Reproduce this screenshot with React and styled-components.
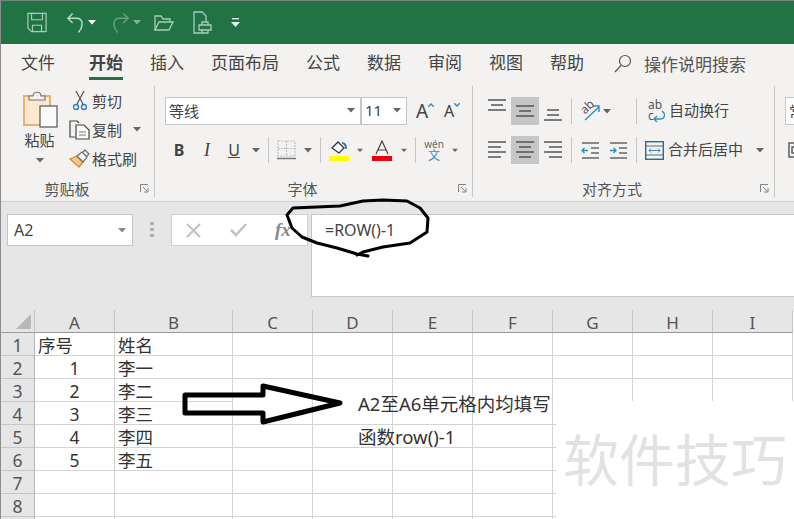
import React from "react";
import styled, { createGlobalStyle } from "styled-components";

const GlobalStyle = createGlobalStyle`
  html, body {
    margin: 0;
    padding: 0;
    background: #fff;
  }
  * {
    box-sizing: border-box;
  }
`;

const Page = styled.div`
  position: relative;
  width: 794px;
  height: 519px;
  overflow: hidden;
  border-left: 1px solid #8c8c8c;
  background: #fff;
  color: #444;
  font-family: "Noto Sans", "Noto Sans CJK SC", sans-serif;
`;

const TitleBar = styled.div`
  display: flex;
  align-items: center;
  height: 44px;
  padding-left: 26px;
  background: #217346;
  border-top: 1px solid #76857c;
`;

const TitleIcon = styled.div`
  display: flex;
  flex: none;
  justify-content: center;
  align-items: center;
  width: ${({ $w }) => $w}px;
  height: 30px;
  margin-left: ${({ $ml }) => $ml || 0}px;
  opacity: ${({ $dim }) => ($dim ? 0.45 : 1)};
`;

const Tabs = styled.div`
  display: flex;
  align-items: flex-start;
  gap: 27px;
  height: 36px;
  padding: 9px 0 0 20px;
  background: #f3f2f1;
`;

const Tab = styled.div`
  height: 27px;
  margin-right: ${({ $mr }) => $mr || 0}px;
  font-size: 17px;
  line-height: 20px;
  white-space: nowrap;
  font-weight: ${({ $active }) => ($active ? 700 : 400)};
  border-bottom: 3px solid ${({ $active }) => ($active ? "#217346" : "transparent")};
`;

const SearchTab = styled.div`
  display: flex;
  align-items: center;
  gap: 12px;
  height: 20px;
  margin-left: 3px;
  font-size: 17px;
  color: #555;
`;

const Ribbon = styled.div`
  display: flex;
  height: 122px;
  background: #f3f2f1;
  border-bottom: 1px solid #cfcfcf;
`;

const Group = styled.div`
  display: flex;
  flex: none;
  flex-direction: column;
  position: relative;
  width: ${({ $w }) => $w}px;
  &::after {
    content: "";
    position: absolute;
    top: 6px;
    right: 0;
    bottom: 4px;
    width: 1px;
    background: ${({ $open }) => ($open ? "transparent" : "#c6c6c6")};
  }
`;

const GroupBody = styled.div`
  flex: 1;
  display: flex;
  flex-direction: ${({ $row }) => ($row ? "row" : "column")};
  gap: ${({ $row }) => ($row ? 0 : 11)}px;
  padding: ${({ $row }) => ($row ? "6px 0 0" : "17px 0 0")};
`;

const GroupLabel = styled.div`
  position: relative;
  height: 24px;
  padding-top: 3px;
  font-size: 15px;
  line-height: 18px;
  text-align: center;
  padding-right: ${({ $pr }) => $pr || 0}px;
  color: #555;
`;

const Launcher = styled.svg`
  position: absolute;
  right: 6px;
  top: 7px;
`;

const PasteColumn = styled.div`
  display: flex;
  flex-direction: column;
  align-items: center;
  width: 68px;
  padding: 4px 0 0 11px;
  font-size: 15px;
`;

const PasteLabel = styled.div`
  margin: 2px 0 0 -2px;
  line-height: 20px;
`;

const CaretBox = styled.div`
  display: flex;
  justify-content: center;
  align-items: center;
  width: ${({ $w }) => $w || 10}px;
  height: ${({ $h }) => $h || 20}px;
  margin-top: ${({ $mt }) => $mt || 0}px;
  margin-left: ${({ $ml }) => $ml || 0}px;
  flex: none;
`;

const ClipList = styled.div`
  display: flex;
  flex-direction: column;
`;

const ClipRow = styled.div`
  display: flex;
  align-items: center;
  height: 29px;
  font-size: 15px;
  white-space: nowrap;
`;

const ClipIcon = styled.div`
  display: flex;
  justify-content: center;
  width: 23px;
  padding-right: 2px;
`;

const ToolRow = styled.div`
  display: flex;
  align-items: center;
  height: 28px;
  padding-left: ${({ $pl }) => $pl || 0}px;
`;

const Select = styled.div`
  display: flex;
  align-items: center;
  justify-content: space-between;
  flex: none;
  width: ${({ $w }) => $w}px;
  height: 28px;
  padding: 0 5px 2px 3px;
  background: #fff;
  border: 1px solid #c6c6c6;
  font-size: 15px;
  white-space: nowrap;
  overflow: hidden;
`;

const Slot = styled.div`
  display: flex;
  flex: none;
  justify-content: center;
  align-items: center;
  width: ${({ $w }) => $w}px;
  height: 28px;
  margin-left: ${({ $ml }) => $ml || 0}px;
  background: ${({ $on }) => ($on ? "#c6c6c6" : "transparent")};
`;

const FontFace = styled.span`
  font-family: "Liberation Serif", serif;
  font-size: 18px;
  font-weight: ${({ $b }) => ($b ? 700 : 400)};
  font-style: ${({ $i }) => ($i ? "italic" : "normal")};
  text-decoration: ${({ $u }) => ($u ? "underline" : "none")};
  color: #444;
`;

const SansFace = styled(FontFace)`
  font-family: "Noto Sans", sans-serif;
  font-size: ${({ $size }) => $size || 17}px;
`;

const RowSep = styled.div`
  flex: none;
  width: 1px;
  height: 26px;
  margin-left: ${({ $ml }) => $ml || 0}px;
  background: #c6c6c6;
`;

const TextTool = styled.div`
  display: flex;
  align-items: center;
  gap: ${({ $gap }) => $gap}px;
  margin-left: ${({ $ml }) => $ml}px;
  font-size: 15px;
  white-space: nowrap;
`;

const ToolText = styled.span`
  margin-top: -4px;
`;

const WenStack = styled.div`
  display: flex;
  flex-direction: column;
  align-items: center;
  font-size: 10px;
  line-height: 12px;
  color: #666;
  b {
    font-size: 12px;
    font-weight: 400;
    color: #2f8fc4;
  }
`;

const WrapGlyph = styled.div`
  position: relative;
  width: 18px;
  height: 24px;
  font-size: 12px;
  line-height: 11px;
  color: #555;
  svg {
    position: absolute;
    right: 0;
    bottom: 0;
  }
`;

const OrientGlyph = styled.div`
  position: relative;
  width: 20px;
  height: 22px;
  svg {
    position: absolute;
    left: 0;
    top: 0;
  }
  span {
    position: absolute;
    left: 0;
    top: 0;
    font-size: 12px;
    line-height: 14px;
    color: #555;
    transform: rotate(-45deg);
  }
`;

const FormulaBar = styled.div`
  display: flex;
  align-items: flex-start;
  height: 108px;
  padding: 12px 0 0 6px;
  background: #e6e6e6;
`;

const NameBox = styled.div`
  display: flex;
  align-items: center;
  justify-content: space-between;
  flex: none;
  width: 126px;
  height: 32px;
  padding: 0 6px;
  background: #fff;
  border: 1px solid #c6c6c6;
  font-size: 16px;
`;

const GripDots = styled.div`
  display: flex;
  flex-direction: column;
  gap: 3px;
  width: 4px;
  margin: 8px 17px 0 17px;
  flex: none;
  i {
    height: 3px;
    background: #b0b0b0;
  }
`;

const FxBox = styled.div`
  display: flex;
  align-items: center;
  gap: 29px;
  flex: none;
  width: 137px;
  height: 32px;
  padding-left: 14px;
  background: #fff;
  border: 1px solid #d0d0d0;
`;

const FxLabel = styled.span`
  font-family: "Liberation Serif", serif;
  font-size: 19px;
  font-style: italic;
  font-weight: 700;
  color: #888;
  margin-left: -1px;
`;

const FormulaInput = styled.div`
  flex: 1;
  height: 83px;
  margin-left: 3px;
  padding: 6px 0 0 13px;
  background: #fff;
  border: 1px solid #c6c6c6;
  border-right: 0;
  font-size: 16px;
  line-height: 18px;
`;

const SheetGrid = styled.div`
  display: grid;
  grid-template-columns: 34px 80px 118px repeat(7, 80px);
  grid-auto-rows: 23px;
`;

const Corner = styled.div`
  display: flex;
  align-items: flex-end;
  justify-content: flex-end;
  padding: 0 3px 3px 0;
  background: #e6e6e6;
  border-right: 1px solid #c6c6c6;
  border-bottom: 1px solid #9b9b9b;
`;

const ColHead = styled.div`
  padding-top: 3px;
  background: #e6e6e6;
  border-right: 1px solid #c6c6c6;
  border-bottom: 1px solid #9b9b9b;
  font-size: 17px;
  line-height: 20px;
  text-align: center;
  color: #555;
`;

const RowHead = styled.div`
  padding-top: 3px;
  background: #e6e6e6;
  border-right: 1px solid #b4b4b4;
  border-bottom: 1px solid #c6c6c6;
  font-size: 17.5px;
  line-height: 19px;
  text-align: center;
  color: #555;
`;

const Cell = styled.div`
  padding: 3px 3px 0;
  background: #fff;
  border-right: 1px solid #d4d4d4;
  border-bottom: 1px solid ${({ $open }) => ($open ? "#fff" : "#d4d4d4")};
  font-size: 17.5px;
  line-height: 19px;
  color: #333;
  text-align: ${({ $center }) => ($center ? "center" : "left")};
  white-space: nowrap;
`;

const Ink = styled.svg`
  position: absolute;
  left: -1px;
  top: 0;
  pointer-events: none;
`;

const Note = styled.div`
  position: absolute;
  left: 357px;
  top: ${({ $top }) => $top}px;
  font-size: 18.5px;
  line-height: 22px;
  color: #333;
  white-space: nowrap;
`;

const WhitePatch = styled.div`
  position: absolute;
  left: 555px;
  top: 401px;
  right: 0;
  bottom: 0;
  background: #fff;
`;

const Watermark = styled.div`
  position: absolute;
  left: 562px;
  top: 419px;
  font-size: 56px;
  line-height: 80px;
  color: #e2e2e2;
  white-space: nowrap;
`;

const Caret = ({ color = "#666" }) => (
  <svg width="8" height="5" viewBox="0 0 8 5">
    <path d="M0 0h8L4 4.5z" fill={color} />
  </svg>
);

const SaveIcon = () => (
  <svg width="21" height="21" viewBox="0 0 22 22" fill="none" stroke="#a5d0b8" strokeWidth="1.3">
    <path d="M1 1h20v20H5l-4-4z" />
    <path d="M5 1v7h12V1M6 21v-7h10v7" />
  </svg>
);

const UndoIcon = ({ flip }) => (
  <svg width="19" height="22" viewBox="0 0 20 22" fill="none" stroke="#b8dcc8" strokeWidth="1.5" style={{ transform: flip ? "scaleX(-1)" : "none" }}>
    <path d="M7 1L2 6l5 5" />
    <path d="M2 6h9c7 0 8 8 2 15" />
  </svg>
);

const OpenIcon = () => (
  <svg width="20" height="18" viewBox="0 0 20 18" fill="none" stroke="#a5d0b8" strokeWidth="1.3">
    <path d="M1 16V2h6l2 3h7v3" />
    <path d="M1 16l4-8h14l-4 8z" />
  </svg>
);

const PreviewIcon = () => (
  <svg width="19" height="23" viewBox="0 0 19 23" fill="none" stroke="#a5d0b8" strokeWidth="1.3">
    <path d="M9 22H1V1h8l4 4v5" />
    <path d="M6 14h12v5H6zM9 14v-3h6v3M9 19v3h6v-3" />
  </svg>
);

const CustomizeIcon = () => (
  <svg width="9" height="10" viewBox="0 0 9 10" fill="#e8f2ec">
    <rect x="1" y="0" width="7" height="1.4" />
    <path d="M0 4h9L4.500 9z" />
  </svg>
);

const SearchIcon = () => (
  <svg width="18" height="19" viewBox="0 0 18 19" fill="none" stroke="#555" strokeWidth="1.2">
    <circle cx="11" cy="7" r="5.5" />
    <path d="M7 11.500L1 18" />
  </svg>
);

const PasteIcon = () => (
  <svg width="35" height="38" viewBox="0 0 35 38">
    <rect x="1" y="6" width="26" height="29" fill="#fbe8cf" stroke="#eab06c" strokeWidth="2" />
    <path d="M6 10V6h4c0-5 8-5 8 0h4v4z" fill="#f3f2f1" stroke="#777" strokeWidth="1.2" />
    <rect x="17" y="16" width="17" height="21" fill="#fafafa" stroke="#555" strokeWidth="1.2" />
  </svg>
);

const ScissorsIcon = () => (
  <svg width="14" height="20" viewBox="0 0 14 20" fill="none">
    <path d="M3 0l7.500 14M11 0L3.500 14" stroke="#555" strokeWidth="1.2" />
    <circle cx="3" cy="16" r="2.500" stroke="#2f7fb8" strokeWidth="1.4" />
    <circle cx="11" cy="16" r="2.500" stroke="#2f7fb8" strokeWidth="1.4" />
  </svg>
);

const CopyIcon = () => (
  <svg width="21" height="20" viewBox="0 0 21 20" fill="none" stroke="#444" strokeWidth="1.2">
    <path d="M6 17H1V1h7l2 2" />
    <path d="M7 5h8l5 5v9H7z" fill="#fafafa" />
    <path d="M10 12h7M10 15h7" stroke="#777" />
  </svg>
);

const BrushIcon = () => (
  <svg width="21" height="19" viewBox="0 0 21 19">
    <path d="M1 10l7-3 6 6-4 5z" fill="#f5c58a" stroke="#e08a30" strokeWidth="1.3" />
    <path d="M8 7l5-4 5 5-4 5zM14 3l2-2 4 4-2 2" fill="#f7f7f7" stroke="#666" strokeWidth="1.2" />
  </svg>
);

const BorderIcon = () => (
  <svg width="19" height="20" viewBox="0 0 19 20" fill="none">
    <path d="M1 1h17v15H1zM9.500 1v15M1 8.500h17" stroke="#c0c0c0" strokeWidth="1.2" strokeDasharray="2 1" />
    <path d="M0 18.500h19" stroke="#777" strokeWidth="1.500" />
  </svg>
);

const FillIcon = () => (
  <svg width="21" height="21" viewBox="0 0 21 21">
    <path d="M3 8l6-6 6 6-5 5z" fill="#fff" stroke="#333" strokeWidth="1.3" />
    <path d="M13 3c3 0 4 2 4 6" fill="none" stroke="#2f7fb8" strokeWidth="2" />
    <rect y="16" width="20" height="5" fill="#ffff00" />
  </svg>
);

const ColorAIcon = () => (
  <svg width="20" height="21" viewBox="0 0 20 21" fill="none">
    <path d="M4 14L10 1l6 13M6 10h8" stroke="#444" strokeWidth="1.200" />
    <rect y="16" width="20" height="5" fill="#e60012" />
  </svg>
);

const SizeArrow = ({ up }) => (
  <svg width="6" height="4" viewBox="0 0 6 4" fill="none" stroke="#2f8fc4" strokeWidth="1.4" style={{ marginBottom: 12 }}>
    <path d={up ? "M0 4l3-3 3 3" : "M0 0l3 3 3-3"} />
  </svg>
);

// horizontal bars 5px apart, used for all the alignment buttons
const BarsIcon = ({ rows, top }) => (
  <svg width="18" height="28" viewBox="0 0 18 28" stroke="#555" strokeWidth="1.5">
    {rows.map(([x1, x2], i) => (
      <path key={i} d={`M${x1} ${top + i * 5}H${x2}`} />
    ))}
  </svg>
);

const OrientArrow = () => (
  <svg width="20" height="22" viewBox="0 0 20 22" fill="none">
    <path d="M5 20L19 7M13 6h6v6" stroke="#2f8fc4" strokeWidth="1.4" />
  </svg>
);

const IndentIcon = ({ right }) => (
  <svg width="19" height="18" viewBox="0 0 19 18" fill="none">
    <path d="M1 2h17M10 7h8M10 12h8M1 17h17" stroke="#666" strokeWidth="1.4" />
    <path d={right ? "M1 9.500h6M4.500 7l2.500 2.500L4.500 12" : "M7 9.500H1M3.500 7L1 9.500 3.500 12"} stroke="#2f8fc4" strokeWidth="1.4" />
  </svg>
);

const WrapArrow = () => (
  <svg width="14" height="13" viewBox="0 0 14 13" fill="none">
    <path d="M10 1c4 3 3 8-2 8H2M5 6L2 9l3 3" stroke="#2f8fc4" strokeWidth="1.4" />
  </svg>
);

const MergeIcon = () => (
  <svg width="19" height="19" viewBox="0 0 19 19" fill="none">
    <rect x="0.700" y="0.700" width="17.600" height="17.600" stroke="#1f6f9f" strokeWidth="1.4" />
    <path d="M1 5h17M1 14h17" stroke="#666" />
    <path d="M4 9.500h11M6 7.500l-2 2 2 2M13 7.500l2 2-2 2" stroke="#2f8fc4" />
  </svg>
);

const LauncherIcon = () => (
  <Launcher width="9" height="9" viewBox="0 0 9 9" fill="none" stroke="#777">
    <path d="M8 4V8H4M0.500 8V0.500H8M3 3l4 4" strokeWidth="0.9" />
  </Launcher>
);

const CrossIcon = () => (
  <svg width="15" height="15" viewBox="0 0 15 15" stroke="#c4c4c4" strokeWidth="2.200">
    <path d="M1 1l13 13M14 1L1 14" />
  </svg>
);

const CheckIcon = () => (
  <svg width="17" height="14" viewBox="0 0 17 14" fill="none" stroke="#c4c4c4" strokeWidth="2.600">
    <path d="M1 7l5 5L16 1" />
  </svg>
);

const CutOffIcon = () => (
  <svg width="14" height="16" viewBox="0 0 14 16" fill="none" stroke="#555" strokeWidth="1.4">
    <rect x="1" y="1" width="12" height="14" />
    <rect x="4" y="5" width="6" height="6" />
  </svg>
);

const tabs = ["文件", "开始", "插入", "页面布局", "公式", "数据", "审阅", "视图", "帮助"];
const columns = ["A", "B", "C", "D", "E", "F", "G", "H", "I"];
const names = ["姓名", "李一", "李二", "李三", "李四", "李五", "", "", ""];
const serials = ["序号", "1", "2", "3", "4", "5", "", "", ""];

const SheetRows = () =>
  names.map((name, i) => (
    <React.Fragment key={i}>
      {/* the ninth row only just shows at the bottom edge, so no number */}
      <RowHead>{i < 8 ? i + 1 : ""}</RowHead>
      <Cell $center={i > 0}>{serials[i]}</Cell>
      <Cell>{name}</Cell>
      {columns.slice(2).map((col) => (
        <Cell key={col} $open={i === 2} />
      ))}
    </React.Fragment>
  ));

const App = () => {
  return (
    <Page>
      <GlobalStyle />
      <TitleBar>
        <TitleIcon $w={20}><SaveIcon /></TitleIcon>
        <TitleIcon $w={20} $ml={18}><UndoIcon /></TitleIcon>
        <TitleIcon $w={14}><Caret color="#fff" /></TitleIcon>
        <TitleIcon $w={20} $ml={11} $dim><UndoIcon flip /></TitleIcon>
        <TitleIcon $w={14} $dim><Caret color="#fff" /></TitleIcon>
        <TitleIcon $w={20} $ml={10}><OpenIcon /></TitleIcon>
        <TitleIcon $w={19} $ml={19}><PreviewIcon /></TitleIcon>
        <TitleIcon $w={9} $ml={19}><CustomizeIcon /></TitleIcon>
      </TitleBar>

      <Tabs>
        {tabs.map((tab) => (
          <Tab key={tab} $active={tab === "开始"} $mr={tab === "文件" ? 7 : 0}>{tab}</Tab>
        ))}
        <SearchTab>
          <SearchIcon />
          操作说明搜索
        </SearchTab>
      </Tabs>

      <Ribbon>
        <Group $w={154}>
          <GroupBody $row>
            <PasteColumn>
              <PasteIcon />
              <PasteLabel>粘贴</PasteLabel>
              <CaretBox $mt={1} $h={18} $ml={-2}><Caret /></CaretBox>
            </PasteColumn>
            <ClipList>
              <ClipRow>
                <ClipIcon><ScissorsIcon /></ClipIcon>
                剪切
              </ClipRow>
              <ClipRow>
                <ClipIcon><CopyIcon /></ClipIcon>
                复制
                <CaretBox $w={30}><Caret /></CaretBox>
              </ClipRow>
              <ClipRow>
                <ClipIcon><BrushIcon /></ClipIcon>
                格式刷
              </ClipRow>
            </ClipList>
          </GroupBody>
          <GroupLabel $pr={22}>
            剪贴板
            <LauncherIcon />
          </GroupLabel>
        </Group>

        <Group $w={318}>
          <GroupBody>
            <ToolRow $pl={10}>
              <Select $w={196}>
                等线
                <Caret />
              </Select>
              <Select $w={46}>
                11
                <Caret />
              </Select>
              <Slot $w={24} $ml={6}>
                <SansFace $size={19}>A</SansFace>
                <SizeArrow up />
              </Slot>
              <Slot $w={24} $ml={3}>
                <SansFace $size={16}>A</SansFace>
                <SizeArrow />
              </Slot>
            </ToolRow>
            <ToolRow $pl={10}>
              <Slot $w={28}><SansFace $b $size={16}>B</SansFace></Slot>
              <Slot $w={28}><FontFace $i>I</FontFace></Slot>
              <Slot $w={26}><SansFace $u $size={16}>U</SansFace></Slot>
              <Slot $w={18}><Caret /></Slot>
              <RowSep $ml={3} />
              <Slot $w={34}><BorderIcon /></Slot>
              <Slot $w={10}><Caret /></Slot>
              <RowSep $ml={7} />
              <Slot $w={36}><FillIcon /></Slot>
              <Slot $w={6}><Caret /></Slot>
              <Slot $w={38}><ColorAIcon /></Slot>
              <Slot $w={6}><Caret /></Slot>
              <RowSep $ml={8} />
              <Slot $w={36}>
                <WenStack>
                  wén
                  <b>文</b>
                </WenStack>
              </Slot>
              <Slot $w={6}><Caret /></Slot>
            </ToolRow>
          </GroupBody>
          <GroupLabel $pr={23}>
            字体
            <LauncherIcon />
          </GroupLabel>
        </Group>

        <Group $w={302}>
          <GroupBody>
            <ToolRow $pl={10}>
              <Slot $w={28}><BarsIcon rows={[[0, 18], [3, 15], [0, 18]]} top={3} /></Slot>
              <Slot $w={28} $on><BarsIcon rows={[[0, 18], [3, 15], [0, 18]]} top={9} /></Slot>
              <Slot $w={28}><BarsIcon rows={[[3, 15], [3, 15], [0, 18]]} top={13} /></Slot>
              <RowSep $ml={4} />
              <Slot $w={20} $ml={8}>
                <OrientGlyph>
                  <OrientArrow />
                  <span>ab</span>
                </OrientGlyph>
              </Slot>
              <Slot $w={14}><Caret /></Slot>
              <RowSep $ml={22} />
              <TextTool $ml={11} $gap={3}>
                <WrapGlyph>
                  ab
                  <br />
                  c
                  <WrapArrow />
                </WrapGlyph>
                <ToolText>自动换行</ToolText>
              </TextTool>
            </ToolRow>
            <ToolRow $pl={10}>
              <Slot $w={28}><BarsIcon rows={[[0, 18], [0, 13], [0, 18], [0, 13]]} top={6} /></Slot>
              <Slot $w={28} $on><BarsIcon rows={[[0, 18], [3, 15], [0, 18], [3, 15]]} top={6} /></Slot>
              <Slot $w={28}><BarsIcon rows={[[0, 18], [5, 18], [0, 18], [5, 18]]} top={6} /></Slot>
              <RowSep $ml={4} />
              <Slot $w={20} $ml={8}><IndentIcon /></Slot>
              <Slot $w={20} $ml={8}><IndentIcon right /></Slot>
              <RowSep $ml={8} />
              <TextTool $ml={8} $gap={4}>
                <MergeIcon />
                <ToolText>合并后居中</ToolText>
                <CaretBox $w={8} $ml={9}><Caret /></CaretBox>
              </TextTool>
            </ToolRow>
          </GroupBody>
          <GroupLabel $pr={24}>
            对齐方式
            <LauncherIcon />
          </GroupLabel>
        </Group>

        <Group $w={60} $open>
          <GroupBody>
            <ToolRow $pl={10}>
              <Select $w={60}>常规</Select>
            </ToolRow>
            <ToolRow $pl={13}>
              <CutOffIcon />
            </ToolRow>
          </GroupBody>
        </Group>
      </Ribbon>

      <FormulaBar>
        <NameBox>
          A2
          <Caret color="#888" />
        </NameBox>
        <GripDots><i /><i /><i /></GripDots>
        <FxBox>
          <CrossIcon />
          <CheckIcon />
          <FxLabel>fx</FxLabel>
        </FxBox>
        <FormulaInput>=ROW()-1</FormulaInput>
      </FormulaBar>

      <SheetGrid>
        <Corner>
          <svg width="15" height="15" viewBox="0 0 15 15">
            <path d="M15 0v15H0z" fill="#b8b8b8" />
          </svg>
        </Corner>
        {columns.map((col) => (
          <ColHead key={col}>{col}</ColHead>
        ))}
        <SheetRows />
      </SheetGrid>

      <Ink width="794" height="519" viewBox="0 0 794 519" fill="none" stroke="#000">
        <path
          d="M368 256L357 254L337 248L317 243L302 237L292 228L287 215L293 208L317 207L340 206L363 201L383 200L407 201L420 208L428 218L427 232L410 243L383 247L363 252L357 255"
          strokeWidth="3"
          strokeLinejoin="round"
          strokeLinecap="round"
        />
        <path
          d="M185 395H263V386L340 403L263 422V413H185Z"
          strokeWidth="5"
          strokeLinejoin="round"
        />
      </Ink>

      <WhitePatch />
      <Note $top={393}>A2至A6单元格内均填写</Note>
      <Note $top={426}>函数row()-1</Note>
      <Watermark>软件技巧</Watermark>
    </Page>
  );
};

export default App;
